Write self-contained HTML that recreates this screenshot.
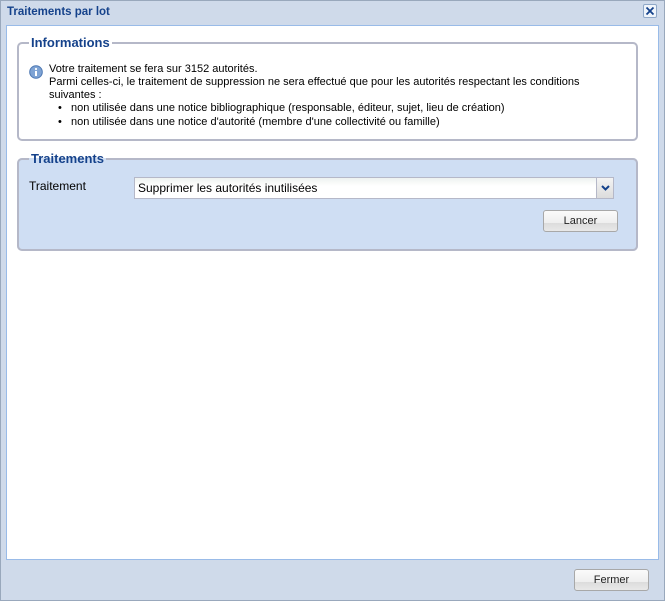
<!DOCTYPE html>
<html><head><style>
*{box-sizing:border-box}
body{margin:0;width:665px;height:601px;font-family:Tahoma,"Liberation Sans",sans-serif;font-size:11px;background:#fff;position:relative}
.win{position:absolute;left:0;top:0;width:665px;height:601px;border:1px solid #99a8bc;background:#cfdaea;}
.title{position:absolute;left:7px;top:6px;font-weight:bold;font-size:11.5px;color:#15428b;}
.close{position:absolute;left:643px;top:4px;width:14px;height:14px;border:1px solid #8fa8c8;border-radius:2px;background:#f0f5fb;}
.body{position:absolute;left:6px;top:25px;width:653px;height:535px;background:#fff;border:1px solid #99bbe8;}
fieldset{position:absolute;margin:0;border:2px solid #b5b8c8;border-radius:5px;padding:0;}
legend{font-weight:bold;font-size:13px;color:#15428b;padding:0 2px;margin-left:10px;}
.t{position:absolute;color:#000;font-size:11px;line-height:13px;}
.btn{position:absolute;border:1px solid #a8a8a8;border-radius:3px;background:linear-gradient(#fbfbfb 0,#efefef 60%,#dcdcdc 61%,#e8e8e8);font-size:11px;text-align:center;color:#222;}
</style></head><body>
<div class="win"></div>
<div class="title">Traitements par lot</div>
<div class="close"><svg width="12" height="12" style="position:absolute;left:0;top:0"><path d="M2.5 2.5L9.5 9.5M9.5 2.5L2.5 9.5" stroke="#15428b" stroke-width="1.8"/></svg></div>
<div class="body"></div>
<fieldset style="left:17px;top:35px;width:621px;height:106px;"><legend>Informations</legend></fieldset>
<svg style="position:absolute;left:29px;top:65px" width="14" height="14"><circle cx="7" cy="7" r="6.3" fill="#7ea3d4" stroke="#4d78b3"/><circle cx="7" cy="4" r="1.1" fill="#fff"/><rect x="6" y="6" width="2" height="5" fill="#fff"/></svg>
<div class="t" style="left:49px;top:63px">Votre traitement se fera sur 3152 autorités.<br>Parmi celles-ci, le traitement de suppression ne sera effectué que pour les autorités respectant les conditions<br>suivantes :</div>
<div class="t" style="left:58px;top:101px;line-height:14px">•&nbsp;&nbsp;&nbsp;non utilisée dans une notice bibliographique (responsable, éditeur, sujet, lieu de création)<br>•&nbsp;&nbsp;&nbsp;non utilisée dans une notice d'autorité (membre d'une collectivité ou famille)</div>
<fieldset style="left:17px;top:151px;width:621px;height:100px;background:#cfdef3;"><legend>Traitements</legend></fieldset>
<div class="t" style="left:29px;top:180px;font-size:12px">Traitement</div>
<div style="position:absolute;left:134px;top:177px;width:480px;height:22px;border:1px solid #b5b8c8;background:linear-gradient(#eef2f0,#fff 40%);"><span style="position:absolute;left:3px;top:3px;font-size:12px">Supprimer les autorités inutilisées</span>
<div style="position:absolute;right:0;top:0;width:17px;height:20px;border-left:1px solid #b5b8c8;background:linear-gradient(#f4f4f4,#dcdcdc)"><svg width="17" height="20"><path d="M5 8l3.5 3.5L12 8" stroke="#15428b" stroke-width="2" fill="none"/></svg></div></div>
<div class="btn" style="left:543px;top:210px;width:75px;height:22px;line-height:20px;">Lancer</div>
<div class="btn" style="left:574px;top:569px;width:75px;height:22px;line-height:20px;">Fermer</div>
</body></html>
